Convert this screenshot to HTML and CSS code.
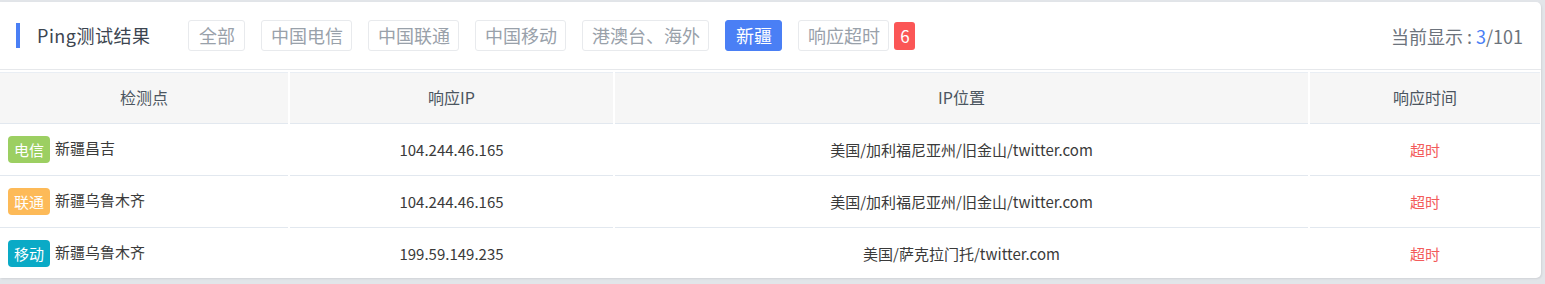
FILE: index.html
```html
<!DOCTYPE html>
<html lang="zh-CN">
<head>
<meta charset="utf-8">
<title>Ping测试结果</title>
<link rel="stylesheet" href="styles.css">
</head>
<body>
<div class="card">
  <div class="head">
    <div class="title">Ping测试结果</div>
    <div class="filters">
      <span class="btn wide">全部</span>
      <span class="btn">中国电信</span>
      <span class="btn">中国联通</span>
      <span class="btn">中国移动</span>
      <span class="btn">港澳台、海外</span>
      <span class="btn active">新疆</span>
      <span class="btn">响应超时</span>
      <span class="badge">6</span>
    </div>
    <div class="count">当前显示 : <span class="num">3</span>/101</div>
  </div>
  <table class="results">
    <colgroup>
      <col class="c1"><col class="c2"><col class="c3"><col class="c4">
    </colgroup>
    <thead>
      <tr><th>检测点</th><th>响应IP</th><th>IP位置</th><th>响应时间</th></tr>
    </thead>
    <tbody>
      <tr>
        <td class="point"><span class="tag dx">电信</span>新疆昌吉</td>
        <td>104.244.46.165</td>
        <td>美国/加利福尼亚州/旧金山/twitter.com</td>
        <td class="timeout">超时</td>
      </tr>
      <tr>
        <td class="point"><span class="tag lt">联通</span>新疆乌鲁木齐</td>
        <td>104.244.46.165</td>
        <td>美国/加利福尼亚州/旧金山/twitter.com</td>
        <td class="timeout">超时</td>
      </tr>
      <tr>
        <td class="point"><span class="tag yd">移动</span>新疆乌鲁木齐</td>
        <td>199.59.149.235</td>
        <td>美国/萨克拉门托/twitter.com</td>
        <td class="timeout">超时</td>
      </tr>
    </tbody>
  </table>
</div>
</body>
</html>
```
FILE: styles.css
```css
* { box-sizing: border-box; }
html, body { margin: 0; padding: 0; }
body {
  background: #e2e5e9;
  padding: 2px 4px 0 0;
  height: 284px;
  overflow: hidden;
  font-family: "Noto Sans CJK SC", "Noto Sans", sans-serif;
}
.card {
  background: #fff;
  width: 1541px;
  height: 276px;
  border-radius: 0 5px 5px 0;
  box-shadow: 1px 1px 2px rgba(0,0,0,0.08);
  overflow: hidden;
}
.head {
  height: 68px;
  border-bottom: 1px solid #e6e8eb;
  display: flex;
  align-items: center;
  padding: 0 18px 0 16px;
}
.title {
  border-left: 4px solid #4a7ff5;
  height: 25px;
  line-height: 25px;
  padding-left: 17px;
  font-size: 18px;
  letter-spacing: 0.5px;
  color: #3c4550;
  margin-right: 38px;
}
.filters {
  display: flex;
  align-items: center;
  gap: 16px;
  flex: 1;
}
.btn {
  height: 31px;
  line-height: 29px;
  padding: 0 8.5px;
  border: 1px solid #e8eaed;
  border-radius: 3px;
  font-size: 18px;
  color: #99a1aa;
}
.btn.wide { padding: 0 9.5px; }
.btn.active {
  background: #4a7ff5;
  border-color: #4a7ff5;
  color: #fff;
  padding: 0 9.5px;
}
.badge {
  margin-left: -11px;
  width: 21px;
  height: 28px;
  line-height: 28px;
  text-align: center;
  border-radius: 3px;
  background: #fb5656;
  color: #fff;
  font-size: 17px;
}
.count {
  font-size: 18px;
  color: #6c737c;
}
.count .num { color: #4a7ff5; }
.results {
  table-layout: fixed;
  border-collapse: separate;
  border-spacing: 2px;
  margin-left: -2px;
  width: 1544px;
}
.c1 { width: 288px; }
.c2 { width: 323px; }
.c3 { width: 693px; }
.c4 { width: 230px; }
.results th {
  background: #f6f6f6;
  border-top: 1px solid #e9eef4;
  border-bottom: 1px solid #e2e8ef;
  height: 52px;
  font-weight: normal;
  font-size: 16px;
  color: #4b5560;
  padding: 0 0 3px;
}
.results td {
  height: 50px;
  border-bottom: 1px solid #e2e8ef;
  text-align: center;
  font-size: 15px;
  color: #3a3a3a;
  padding: 0 0 3px;
}
.results td.point {
  text-align: left;
  padding-left: 8px;
}
.tag {
  display: inline-block;
  width: 42px;
  height: 27px;
  line-height: 27px;
  text-align: center;
  border-radius: 4px;
  color: #fff;
  font-size: 15px;
  margin-right: 5px;
  vertical-align: middle;
}
.tag.dx { background: #9ccf62; }
.tag.lt { background: #fdba58; }
.tag.yd { background: #0aaac6; }
.results td.timeout { color: #f35b5b; }
```
